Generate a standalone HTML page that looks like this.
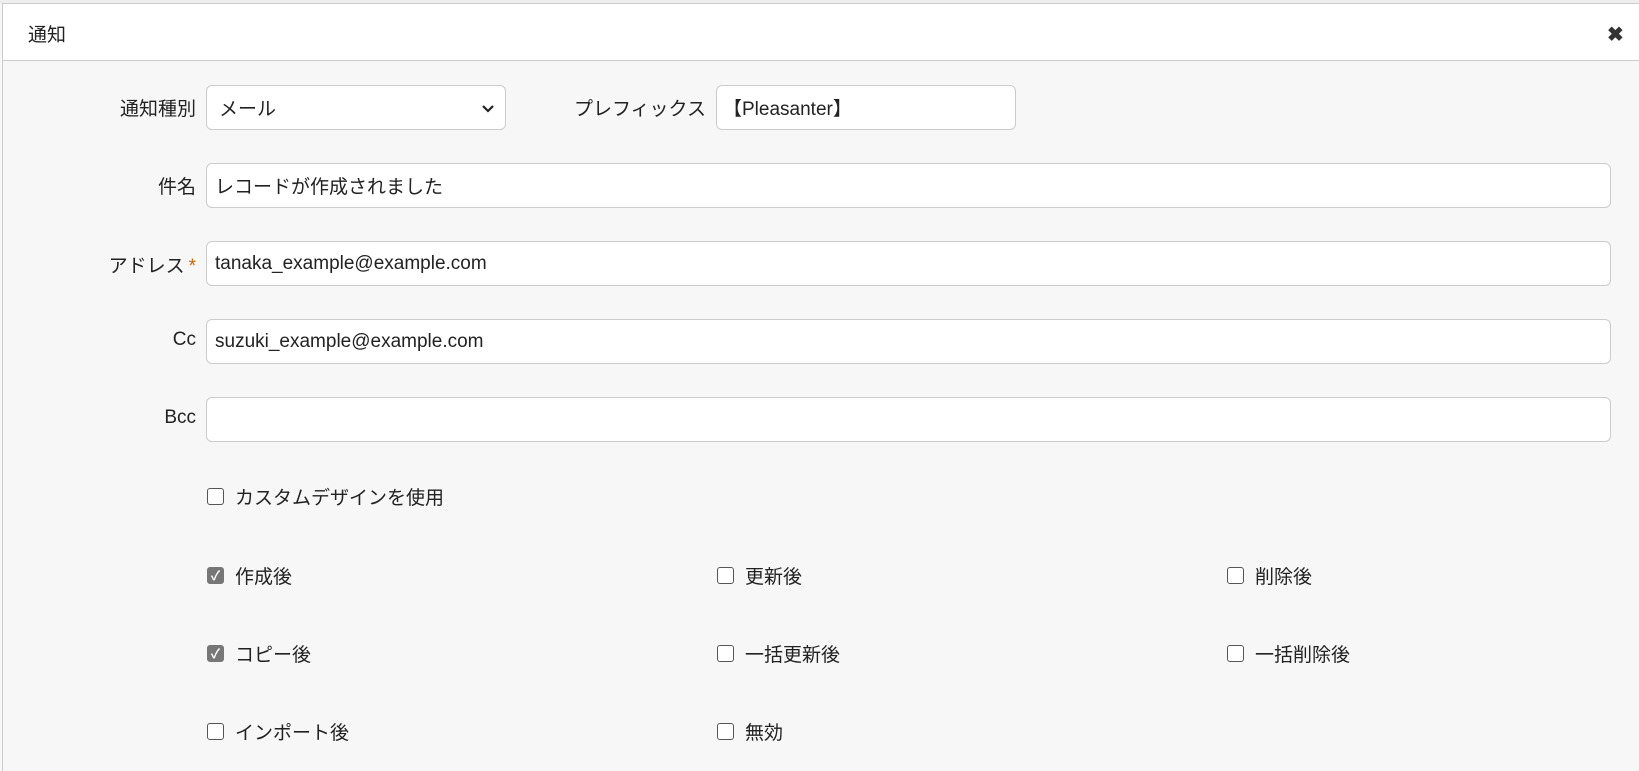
<!DOCTYPE html>
<html><head><meta charset="utf-8"><style>
body{margin:0;width:1639px;height:770px;overflow:hidden;background:#f7f7f7;font-family:"Liberation Sans","Noto Sans CJK JP",sans-serif;color:#222;position:relative}
.top{position:absolute;left:0;top:0;width:1639px;height:4px;background:#eee}
.dlg{position:absolute;left:2px;top:3px;width:1637px;height:767px;background:#f7f7f7;border-left:1px solid #ccc;border-top:1px solid #ccc}
.hd{position:absolute;left:0;top:0;right:0;height:56px;background:#fff;border-bottom:1px solid #ccc}
.t{position:absolute;left:25px;top:16px;font-size:19px}
.x{position:absolute;left:1604px;top:18px;font-size:20px;font-weight:bold;color:#333}
.lb{position:absolute;font-size:19px;text-align:right;width:190px}
.in{position:absolute;background:#fff;border:1px solid #ccc;border-radius:6px;box-sizing:border-box;font-size:19px;padding:0 0 0 8px;display:flex;align-items:center}
.cb{position:absolute;font-size:19px;display:flex;align-items:center}
.cb i{display:inline-block;width:17px;height:17px;border:1.5px solid #555;border-radius:3px;margin-right:11px;box-sizing:border-box;background:#fff}
.cb i.on{background:#777;border-color:#777;color:#fff;font-style:normal;font-size:13px;line-height:15px;text-align:center;font-weight:bold}
</style></head><body>
<div class="top"></div>
<div class="dlg">
<div class="hd"><div class="t">通知</div><div class="x">✖</div></div>
</div>
<div class="lb" style="left:6px;top:94px">通知種別</div>
<div class="in" style="left:206px;top:85px;width:300px;height:45px;padding-left:12px">メール<svg style="position:absolute;right:10px;top:18px" width="14" height="10" viewBox="0 0 14 10"><path d="M2 2l5 5 5-5" fill="none" stroke="#222" stroke-width="2.2"/></svg></div>
<div class="lb" style="left:516px;top:94px">プレフィックス</div>
<div class="in" style="left:716px;top:85px;width:300px;height:45px;padding-left:6px">【Pleasanter】</div>
<div class="lb" style="left:6px;top:172px">件名</div>
<div class="in" style="left:206px;top:163px;width:1405px;height:45px">レコードが作成されました</div>
<div class="lb" style="left:6px;top:251px">アドレス<span style="color:#c60;margin-left:4px">*</span></div>
<div class="in" style="left:206px;top:241px;width:1405px;height:45px">tanaka_example@example.com</div>
<div class="lb" style="left:6px;top:329px">Cc</div>
<div class="in" style="left:206px;top:319px;width:1405px;height:45px">suzuki_example@example.com</div>
<div class="lb" style="left:6px;top:407px">Bcc</div>
<div class="in" style="left:206px;top:397px;width:1405px;height:45px"></div>
<div class="cb" style="left:207px;top:483px"><i></i>カスタムデザインを使用</div>
<div class="cb" style="left:207px;top:562px"><i class="on">✓</i>作成後</div>
<div class="cb" style="left:717px;top:562px"><i></i>更新後</div>
<div class="cb" style="left:1227px;top:562px"><i></i>削除後</div>
<div class="cb" style="left:207px;top:640px"><i class="on">✓</i>コピー後</div>
<div class="cb" style="left:717px;top:640px"><i></i>一括更新後</div>
<div class="cb" style="left:1227px;top:640px"><i></i>一括削除後</div>
<div class="cb" style="left:207px;top:718px"><i></i>インポート後</div>
<div class="cb" style="left:717px;top:718px"><i></i>無効</div>
</body></html>
